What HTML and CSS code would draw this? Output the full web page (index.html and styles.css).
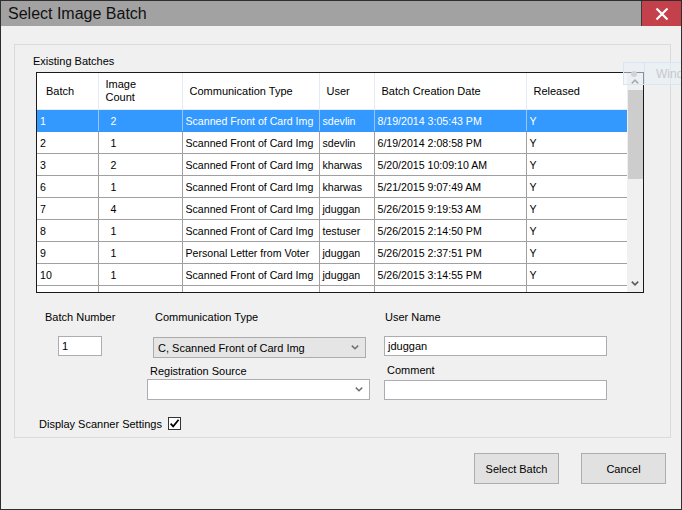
FILE: index.html
```html
<!DOCTYPE html>
<html lang="en">
<head>
    <meta charset="UTF-8">
    <title>Select Image Batch</title>
    <link rel="stylesheet" href="styles.css">
</head>
<body>

    <div class="window">
        <div class="titlebar">
            <span class="title">Select Image Batch</span>
            <div class="close">
                <svg width="14" height="14" viewBox="0 0 14 14">
                    <path d="M1.5 1.5 L12.5 12.5 M12.5 1.5 L1.5 12.5" stroke="#fff" stroke-width="2.2"/>
                </svg>
            </div>
        </div>

        <div class="groupbox">
            <div class="group-label">Existing Batches</div>

            <div class="grid">
                <div class="grid-body">
                    <table>
                        <colgroup>
                            <col style="width:61px">
                            <col style="width:84px">
                            <col style="width:137px">
                            <col style="width:55px">
                            <col style="width:152px">
                            <col style="width:101px">
                        </colgroup>
                        <thead>
                            <tr>
                                <th>Batch</th>
                                <th>Image<br>Count</th>
                                <th>Communication Type</th>
                                <th>User</th>
                                <th>Batch Creation Date</th>
                                <th>Released</th>
                            </tr>
                        </thead>
                        <tbody id="rows"></tbody>
                    </table>
                </div>
                <div class="vscroll">
                    <div class="arrow">
                        <svg width="8" height="5" viewBox="0 0 8 5"><path d="M0.8 4.4 L4 1.2 L7.2 4.4" fill="none" stroke="#5a5a5a" stroke-width="1.6"/></svg>
                    </div>
                    <div class="thumb"></div>
                    <div class="track"></div>
                    <div class="arrow">
                        <svg width="8" height="5" viewBox="0 0 8 5"><path d="M0.8 0.6 L4 3.8 L7.2 0.6" fill="none" stroke="#5a5a5a" stroke-width="1.6"/></svg>
                    </div>
                </div>
            </div>

            <div class="form">
                <div class="col col-batch">
                    <label class="lbl">Batch Number</label>
                    <div class="textbox tb-batch">1</div>
                </div>
                <div class="col col-type">
                    <label class="lbl lbl-type">Communication Type</label>
                    <div class="combo combo-type">
                        <span>C, Scanned Front of Card Img</span>
                        <svg width="8" height="5" viewBox="0 0 8 5"><path d="M0.8 0.6 L4 3.8 L7.2 0.6" fill="none" stroke="#707070" stroke-width="1.5"/></svg>
                    </div>
                    <label class="lbl lbl-source">Registration Source</label>
                    <div class="combo combo-source">
                        <span></span>
                        <svg width="8" height="5" viewBox="0 0 8 5"><path d="M0.8 0.6 L4 3.8 L7.2 0.6" fill="none" stroke="#707070" stroke-width="1.5"/></svg>
                    </div>
                </div>
                <div class="col col-user">
                    <label class="lbl lbl-user">User Name</label>
                    <div class="textbox tb-wide">jduggan</div>
                    <label class="lbl lbl-comment">Comment</label>
                    <div class="textbox tb-wide tb-comment"></div>
                </div>
            </div>

            <div class="check-row">
                <span>Display Scanner Settings</span>
                <div class="checkbox">
                    <svg width="11" height="11" viewBox="0 0 11 11"><path d="M1.6 5.6 L4.2 8.4 L9.6 1.8" fill="none" stroke="#000" stroke-width="1.7"/></svg>
                </div>
            </div>
        </div>

        <div class="buttons">
            <button class="btn">Select Batch</button>
            <button class="btn">Cancel</button>
        </div>

        <div class="ghost">
            <div class="ghost-dot"><span></span></div>
            <div class="ghost-text">Wind</div>
        </div>
    </div>

    <script>
        let batches = [
            ["1", "2", "Scanned Front of Card Img", "sdevlin", "8/19/2014 3:05:43 PM", "Y"],
            ["2", "1", "Scanned Front of Card Img", "sdevlin", "6/19/2014 2:08:58 PM", "Y"],
            ["3", "2", "Scanned Front of Card Img", "kharwas", "5/20/2015 10:09:10 AM", "Y"],
            ["6", "1", "Scanned Front of Card Img", "kharwas", "5/21/2015 9:07:49 AM", "Y"],
            ["7", "4", "Scanned Front of Card Img", "jduggan", "5/26/2015 9:19:53 AM", "Y"],
            ["8", "1", "Scanned Front of Card Img", "testuser", "5/26/2015 2:14:50 PM", "Y"],
            ["9", "1", "Personal Letter from Voter", "jduggan", "5/26/2015 2:37:51 PM", "Y"],
            ["10", "1", "Scanned Front of Card Img", "jduggan", "5/26/2015 3:14:55 PM", "Y"],
            ["", "", "", "", "", ""]
        ];

        let tbody = document.getElementById("rows");
        batches.forEach((b, index) => {
            let tr = document.createElement("tr");
            if (index === 0) tr.className = "selected";
            tr.innerHTML = b.map((v, i) => `<td class="${i === 1 ? 'count' : ''}">${v}</td>`).join("");
            tbody.appendChild(tr);
        });
    </script>

</body>
</html>
```

FILE: styles.css
```css
body {
    margin: 0;
    background: #f0f0f0;
    font-family: "Liberation Sans", Arial, sans-serif;
    font-size: 11px;
    color: #000;
}
.window {
    position: relative;
    width: 682px;
    height: 510px;
    box-sizing: border-box;
    border: 1px solid #2e2e2e;
    background: #f0f0f0;
    overflow: hidden;
}
.titlebar {
    height: 25px;
    background: #a2a2a2;
    display: flex;
    align-items: center;
    justify-content: space-between;
}
.title {
    font-size: 16px;
    color: #111;
    padding-left: 7px;
}
.close {
    width: 39px;
    height: 25px;
    background: #c4414b;
    border-left: 1px solid #3a3a3a;
    display: flex;
    align-items: center;
    justify-content: center;
}
.groupbox {
    margin: 18px 0 0 13px;
    width: 657px;
    height: 394px;
    box-sizing: border-box;
    border: 1px solid #dadada;
}
.group-label {
    margin: 10px 0 0 18px;
    line-height: 13px;
}
.grid {
    margin: 4px 0 0 21px;
    width: 608px;
    height: 221px;
    box-sizing: border-box;
    border: 1px solid #1a1a1a;
    display: flex;
    background: #fff;
}
.grid-body {
    width: 590px;
    overflow: hidden;
}
table {
    table-layout: fixed;
    border-collapse: collapse;
    width: 590px;
}
th {
    height: 36px;
    padding: 0 0 0 7px;
    text-align: left;
    font-weight: normal;
    line-height: 13px;
    border: 1px solid #e3ebf4;
    border-top: none;
    white-space: nowrap;
}
th:first-child {
    border-left: none;
    padding-left: 9px;
}
td {
    height: 21px;
    padding: 0 0 0 3px;
    border-right: 1px solid #a0a0a0;
    border-bottom: 1px solid #a0a0a0;
    white-space: nowrap;
    overflow: hidden;
    font-size: 10.6px;
}
td.count {
    padding-left: 12px;
}
tr.selected td {
    background: #3399ff;
    color: #fff;
    border-right-color: #9cc4ec;
    border-bottom-color: #3399ff;
}
.vscroll {
    width: 16px;
    background: #f0f0f0;
    display: flex;
    flex-direction: column;
}
.arrow {
    height: 17px;
    display: flex;
    align-items: center;
    justify-content: center;
}
.thumb {
    height: 89px;
    margin-left: 1px;
    background: #cdcdcd;
}
.track {
    flex: 1;
}
.form {
    display: flex;
    margin-top: 18px;
}
.col {
    display: flex;
    flex-direction: column;
    align-items: flex-start;
}
.col-batch {
    margin-left: 30px;
    width: 102px;
}
.col-type {
    width: 237px;
}
.lbl {
    line-height: 13px;
}
.lbl-type {
    margin-left: 8px;
}
.lbl-source {
    margin: 7px 0 0 3px;
}
.lbl-user {
    margin-left: 1px;
}
.lbl-comment {
    margin: 8px 0 0 3px;
}
.textbox {
    height: 20px;
    box-sizing: border-box;
    border: 1px solid #abadb3;
    background: #fff;
    padding-left: 3px;
    line-height: 18px;
    margin-top: 12px;
}
.tb-batch {
    width: 44px;
    margin-left: 13px;
}
.tb-wide {
    width: 223px;
}
.tb-comment {
    margin-top: 3px;
}
.combo {
    height: 21px;
    box-sizing: border-box;
    border: 1px solid #acacac;
    display: flex;
    align-items: center;
    justify-content: space-between;
    padding: 0 6px 0 4px;
}
.combo-type {
    width: 213px;
    margin: 13px 0 0 6px;
    background: #e5e5e5;
}
.combo-source {
    width: 223px;
    margin-top: 1px;
    background: #fff;
    border-color: #abadb3;
}
.check-row {
    display: flex;
    align-items: center;
    margin: 17px 0 0 24px;
    height: 13px;
}
.checkbox {
    width: 13px;
    height: 13px;
    box-sizing: border-box;
    border: 1px solid #333;
    background: #fff;
    margin-left: 6px;
    display: flex;
    align-items: center;
    justify-content: center;
}
.buttons {
    display: flex;
    justify-content: flex-end;
    gap: 22px;
    margin: 15px 15px 0 0;
}
.btn {
    width: 85px;
    height: 31px;
    border: 1px solid #adadad;
    background: #e1e1e1;
    font-family: "Liberation Sans", Arial, sans-serif;
    font-size: 11px;
    color: #000;
    padding: 0;
}
.ghost {
    position: absolute;
    left: 622px;
    top: 61px;
    height: 21px;
    width: 80px;
    border: 1px solid #d8e5f3;
    background: rgba(232, 240, 249, 0.55);
    display: flex;
    align-items: center;
}
.ghost-dot {
    width: 20px;
    height: 21px;
    border-right: 1px solid #d8e5f3;
    display: flex;
    align-items: center;
    justify-content: center;
}
.ghost-dot span {
    width: 6px;
    height: 6px;
    border-radius: 50%;
    background: #d2d2d2;
}
.ghost-text {
    padding-left: 11px;
    font-size: 12px;
    color: #c9c9c9;
}
```
